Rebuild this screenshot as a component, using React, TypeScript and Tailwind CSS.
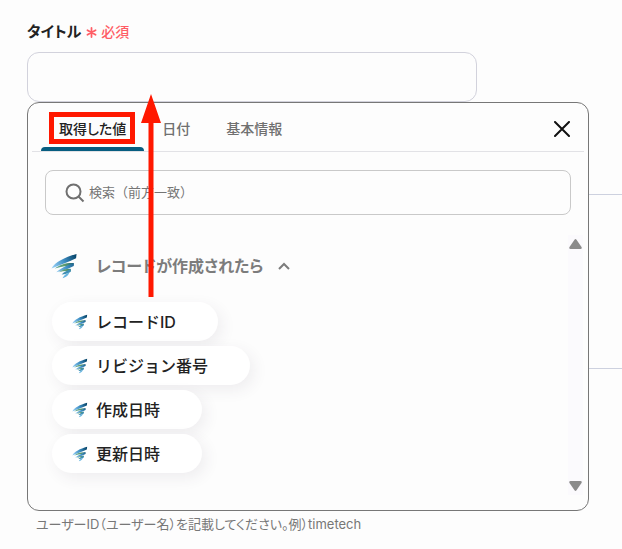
import { useState } from "react";

function BrandMark({ className }: { className: string }) {
  return (
    <svg viewBox="0 0 28 26" className={className} fill="none" aria-hidden="true">
      <defs>
        <linearGradient id="blue" x1="1" y1="14" x2="26" y2="2" gradientUnits="userSpaceOnUse">
          <stop offset="0" stopColor="#9bd2f7" />
          <stop offset="0.5" stopColor="#3f8fc4" />
          <stop offset="1" stopColor="#064468" />
        </linearGradient>
        <linearGradient id="green" x1="5" y1="16" x2="24" y2="11" gradientUnits="userSpaceOnUse">
          <stop offset="0" stopColor="#5fa89a" />
          <stop offset="0.5" stopColor="#5f9c6c" />
          <stop offset="1" stopColor="#1b647c" />
        </linearGradient>
      </defs>
      <path d="M0.500 15.500C4 9 14 4 26.500 0.500L26 5C18 9 9 12 0.500 15.500Z" fill="url(#blue)" />
      <path d="M4 15.500C9 11.500 15 9.500 23.500 9.800L23.500 12.500C17 12.500 11 13.500 4 15.500Z" fill="url(#green)" />
      <path d="M5.500 19.500C9 15.500 16 12.500 23.500 9.800L23.500 13C18 16 12 18 5.500 19.500Z" fill="url(#blue)" />
      <path d="M8 19.500C12 17 16 15.800 20.500 16L20.500 18.500C16 18 12 18.500 8 19.500Z" fill="url(#green)" />
      <path d="M11 21.800C14 19 17 17.500 20.500 16.200L20.500 19C17.500 21.300 14.500 21.500 11 21.800Z" fill="#3f8fb4" />
      <path d="M12 25.800C13 23 15.500 21 19 19.500C18.500 22.800 15.500 24.500 12 25.800Z" fill="#66b4df" />
    </svg>
  );
}

const tabs = ["取得した値", "日付", "基本情報"];
const fields = ["レコードID", "リビジョン番号", "作成日時", "更新日時"];

export default function App() {
  const [active, setActive] = useState(0);
  const [open, setOpen] = useState(true);

  return (
    <main className="min-h-screen overflow-hidden bg-[#fdfdfd] pt-5 pr-[33px] pl-[27px] font-[Inter,'Noto_Sans_CJK_JP',sans-serif] text-[#222]">
      <div className="flex h-6 items-center gap-[5px] text-sm">
        <label htmlFor="title" className="text-[15px] font-bold [font-feature-settings:'palt']">タイトル</label>
        <span className="flex items-center gap-1 font-medium text-[#ff5d65]">
          <svg viewBox="0 0 10 10" className="size-[11px]" stroke="currentColor" strokeWidth="1.600" strokeLinecap="round" aria-hidden="true">
            <path d="M5 0.800V9.200M1.300 2.900L8.700 7.100M8.700 2.900L1.300 7.100" />
          </svg>
          必須
        </span>
      </div>
      <input id="title" className="mt-2 block h-[50px] w-4/5 rounded-xl border border-[#d2d2dc] bg-[#fdfdfd] px-4 outline-none" />

      <div className="relative isolate">
        <div className="absolute top-[92px] -right-[33px] left-0 -z-10 h-[175px] border-y border-[#cdd1df]" />
        <section className="h-[409px] rounded-xl border border-[#777] bg-[#fdfdfd]">
          <header className="mx-1 flex h-[49px] items-stretch border-b border-[#e2e2e6] pl-[9px]">
            <div role="tablist" className="flex flex-1 text-sm font-medium [font-feature-settings:'palt']">
              {tabs.map((tab, i) => (
                <button
                  key={tab}
                  role="tab"
                  aria-selected={active === i}
                  onClick={() => setActive(i)}
                  className={`relative px-[18px] pt-1 ${active === i ? "text-[#222]" : "text-[#707070]"}`}
                >
                  {tab}
                  {active === i && <span className="absolute inset-x-0 bottom-0 h-1 rounded-t bg-[#075d80]" />}
                  {i === 0 && <span className="absolute top-[9px] right-[9px] left-2 h-8 border-5 border-[#ff1800]" />}
                </button>
              ))}
            </div>
            <button aria-label="閉じる" className="mt-1 px-[14px] text-[#111]">
              <svg viewBox="0 0 16 16" className="size-4" stroke="currentColor" strokeWidth="2" strokeLinecap="round">
                <path d="M1 1L15 15M15 1L1 15" />
              </svg>
            </button>
          </header>

          <label className="mx-[17px] mt-[18px] flex h-[45px] items-center gap-1 rounded-lg border border-[#c9c9c9] px-[19px] text-[#707070]">
            <svg viewBox="0 0 20 20" className="size-5 shrink-0" fill="none" stroke="currentColor" strokeWidth="2" aria-hidden="true">
              <circle cx="8.500" cy="8.500" r="7" />
              <path d="M13.500 13.500L18.500 18.500" />
            </svg>
            <input aria-label="検索" placeholder="検索（前方一致）" className="min-w-0 flex-1 bg-transparent text-[13px] outline-none placeholder:text-[#757575]" />
          </label>

          <div className="mt-5 mr-[5px] ml-6 flex h-[260px]">
            <div className="flex-1">
              <button onClick={() => setOpen(!open)} aria-expanded={open} className="mt-[15px] flex h-8 items-center text-base font-semibold text-[#7c7c7c] [font-feature-settings:'palt']">
                <BrandMark className="mr-[18px] -ml-px h-[26px] w-[27px]" />
                レコードが作成されたら
                <svg viewBox="0 0 12 8" className="ml-[15px] h-2 w-3" fill="none" stroke="currentColor" strokeWidth="2" aria-hidden="true">
                  <path d="M1 7L6 2L11 7" />
                </svg>
              </button>
              {open && (
                <ul className="mt-5 flex flex-col items-start gap-[5px]">
                  {fields.map((field) => (
                    <li key={field}>
                      <button className="flex h-[39px] items-center rounded-full bg-white pr-[42px] pl-5 text-base font-medium shadow-[4px_5px_15px_rgba(70,50,80,0.08)]">
                        <BrandMark className="mr-2 size-4" />
                        {field}
                      </button>
                    </li>
                  ))}
                </ul>
              )}
            </div>
            <div className="flex w-[15px] flex-col items-center justify-between bg-[#fbfafd] py-1 text-[#8b8b8b]" aria-hidden="true">
              <svg viewBox="0 0 13 10" className="h-[10px] w-[13px]" fill="currentColor">
                <path d="M5.500 0.700Q6.500 -0.500 7.500 0.700L12.500 8Q13.300 10 11.500 10H1.500Q-0.300 10 0.500 8Z" />
              </svg>
              <svg viewBox="0 0 13 10" className="h-[10px] w-[13px] rotate-180" fill="currentColor">
                <path d="M5.500 0.700Q6.500 -0.500 7.500 0.700L12.500 8Q13.300 10 11.500 10H1.500Q-0.300 10 0.500 8Z" />
              </svg>
            </div>
          </div>
        </section>
        <svg viewBox="0 0 20 203" className="pointer-events-none absolute -top-2 left-[114px] h-[203px] w-5" fill="#ff1800" aria-hidden="true">
          <path d="M10 0L20 29H12.500V203H7.500V29H0Z" />
        </svg>
      </div>
      <p className="pt-[3px] pl-[9px] text-[13px] leading-5 text-[#777] [font-feature-settings:'palt']">
        ユーザーID（ユーザー名）を記載してください。例）timetech
      </p>
    </main>
  );
}
